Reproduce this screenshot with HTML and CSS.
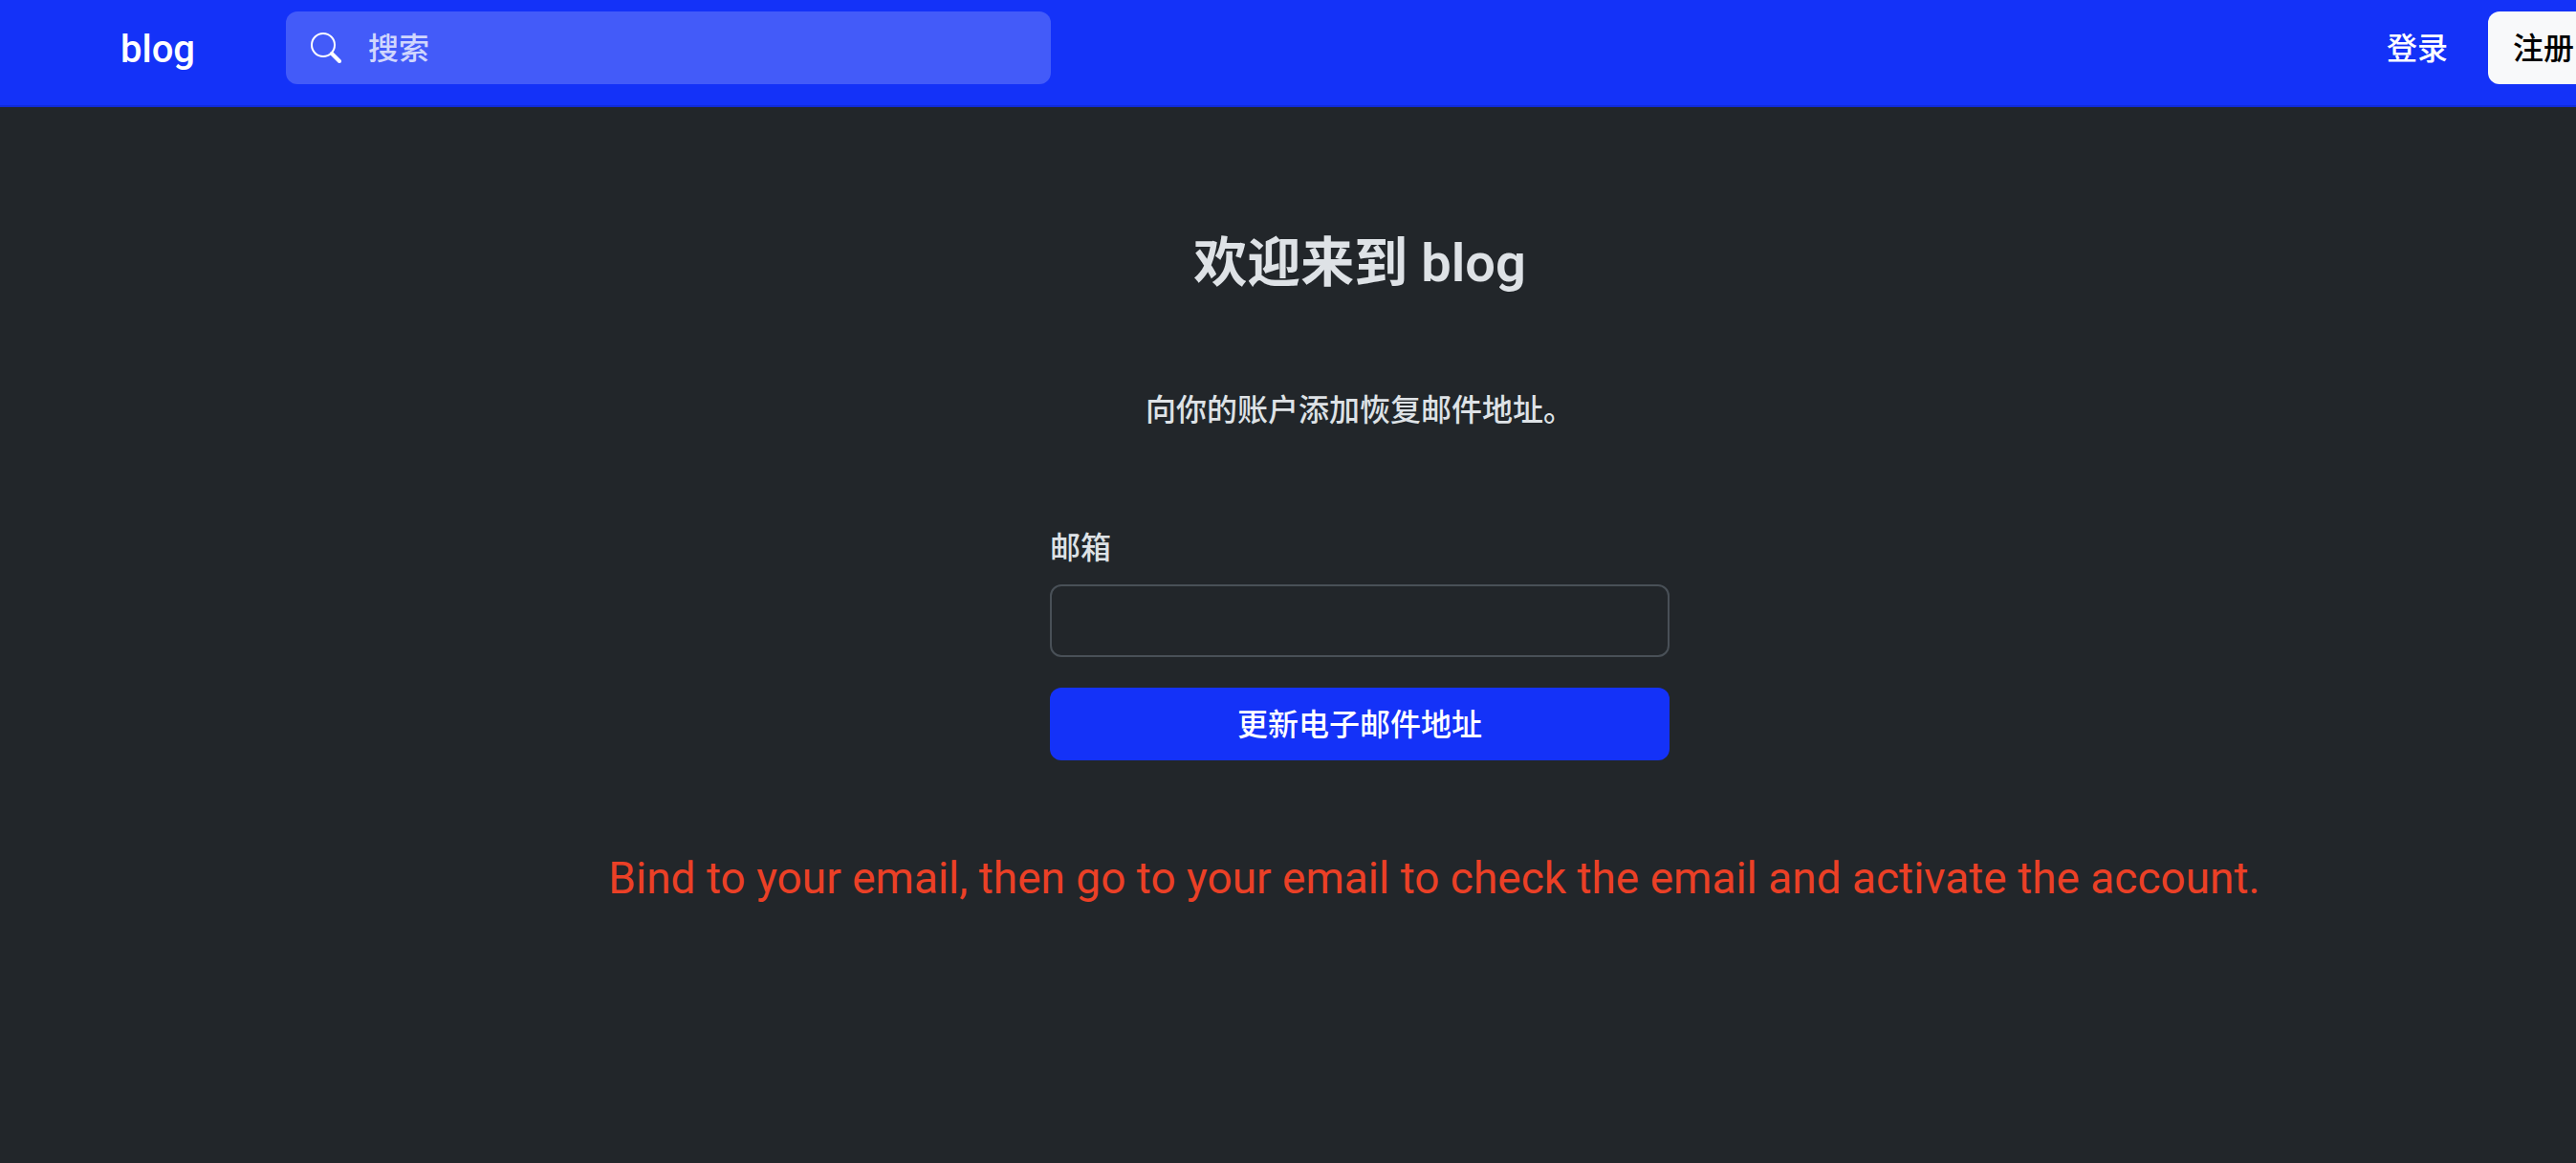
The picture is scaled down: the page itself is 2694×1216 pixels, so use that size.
FILE: index.html
```html
<!DOCTYPE html>
<html lang="zh-CN">
<head>
<meta charset="utf-8">
<meta name="viewport" content="width=device-width, initial-scale=1">
<title>blog</title>
<link rel="stylesheet" href="styles.css">
</head>
<body>
<div class="page">
  <header class="navbar">
    <a class="brand" href="#">blog</a>
    <form class="search" role="search">
      <svg class="search-icon" viewBox="0 0 32 32" aria-hidden="true">
        <circle cx="13" cy="13" r="12" fill="none" stroke="currentColor" stroke-width="2"/>
        <path d="M22 22l8 8" fill="none" stroke="currentColor" stroke-width="4" stroke-linecap="round"/>
      </svg>
      <input class="search-input" type="search" placeholder="搜索" aria-label="搜索">
    </form>
    <nav class="actions">
      <a class="login" href="#">登录</a>
      <button class="signup" type="button">注册</button>
    </nav>
  </header>
  <main class="content">
    <h1 class="title">欢迎来到 blog</h1>
    <p class="lead">向你的账户添加恢复邮件地址。</p>
    <form class="email-form">
      <label class="label" for="email">邮箱</label>
      <input class="email" id="email" type="email">
      <button class="submit" type="submit">更新电子邮件地址</button>
    </form>
    <p class="notice">Bind to your email, then go to your email to check the email and activate the account.</p>
  </main>
</div>
</body>
</html>
```
FILE: styles.css
```css
* {
  box-sizing: border-box;
}

body {
  margin: 0;
  min-height: 100vh;
  overflow-x: hidden;
  background: #22262a;
  color: #dee2e6;
  font: 500 32px/48px Roboto, "Noto Sans CJK SC", sans-serif;
}

button,
input {
  font: inherit;
}

/* The page runs wider than the window and is cut at its right edge. */
.page {
  width: calc(100% + 150px);
}

.navbar {
  display: flex;
  align-items: center;
  padding: 12px 126px 22px;
  border-bottom: 2px solid #112bd6;
  background: #1432f8;
}

.brand {
  width: 173px;
  padding-top: 4px;
  color: #fff;
  font-size: 40px;
  text-decoration: none;
}

.search {
  display: flex;
  align-items: center;
  gap: 28px;
  width: 800px;
  height: 76px;
  padding: 0 26px;
  border-radius: 12px;
  background: #435bf9;
  color: #fff;
}

.search-icon {
  flex: none;
  width: 32px;
  height: 32px;
}

.search-input {
  flex: 1;
  min-width: 0;
  padding: 2px 0 0;
  border: 0;
  outline: 0;
  background: transparent;
  color: #fff;
}

.search-input::placeholder {
  color: #d0d6fd;
  opacity: 1;
}

.actions {
  display: flex;
  align-items: center;
  gap: 42px;
  margin-left: auto;
}

.login {
  padding-top: 2px;
  color: #fff;
  text-decoration: none;
}

.signup {
  height: 76px;
  padding: 2px 26px 0;
  border: 0;
  border-radius: 12px;
  background: #f8f9fa;
  color: #000;
}

.content {
  display: flex;
  flex-direction: column;
  align-items: center;
  gap: 96px;
  padding: 130px 0;
}

.title,
.lead,
.notice {
  margin: 0;
}

.title {
  font-size: 56px;
  font-weight: 600;
  line-height: 67px;
}

.email-form {
  display: flex;
  flex-direction: column;
  width: 648px;
}

.email {
  height: 76px;
  margin: 14px 0 32px;
  padding: 0 24px;
  border: 2px solid #495057;
  border-radius: 12px;
  outline: 0;
  background: transparent;
  color: inherit;
}

.submit {
  height: 76px;
  padding: 2px 0 0;
  border: 0;
  border-radius: 12px;
  background: #1432f8;
  color: #fff;
}

.notice {
  padding-left: 156px;
  color: #eb4026;
  font-size: 46px;
  font-weight: 400;
  line-height: 54px;
}
```
